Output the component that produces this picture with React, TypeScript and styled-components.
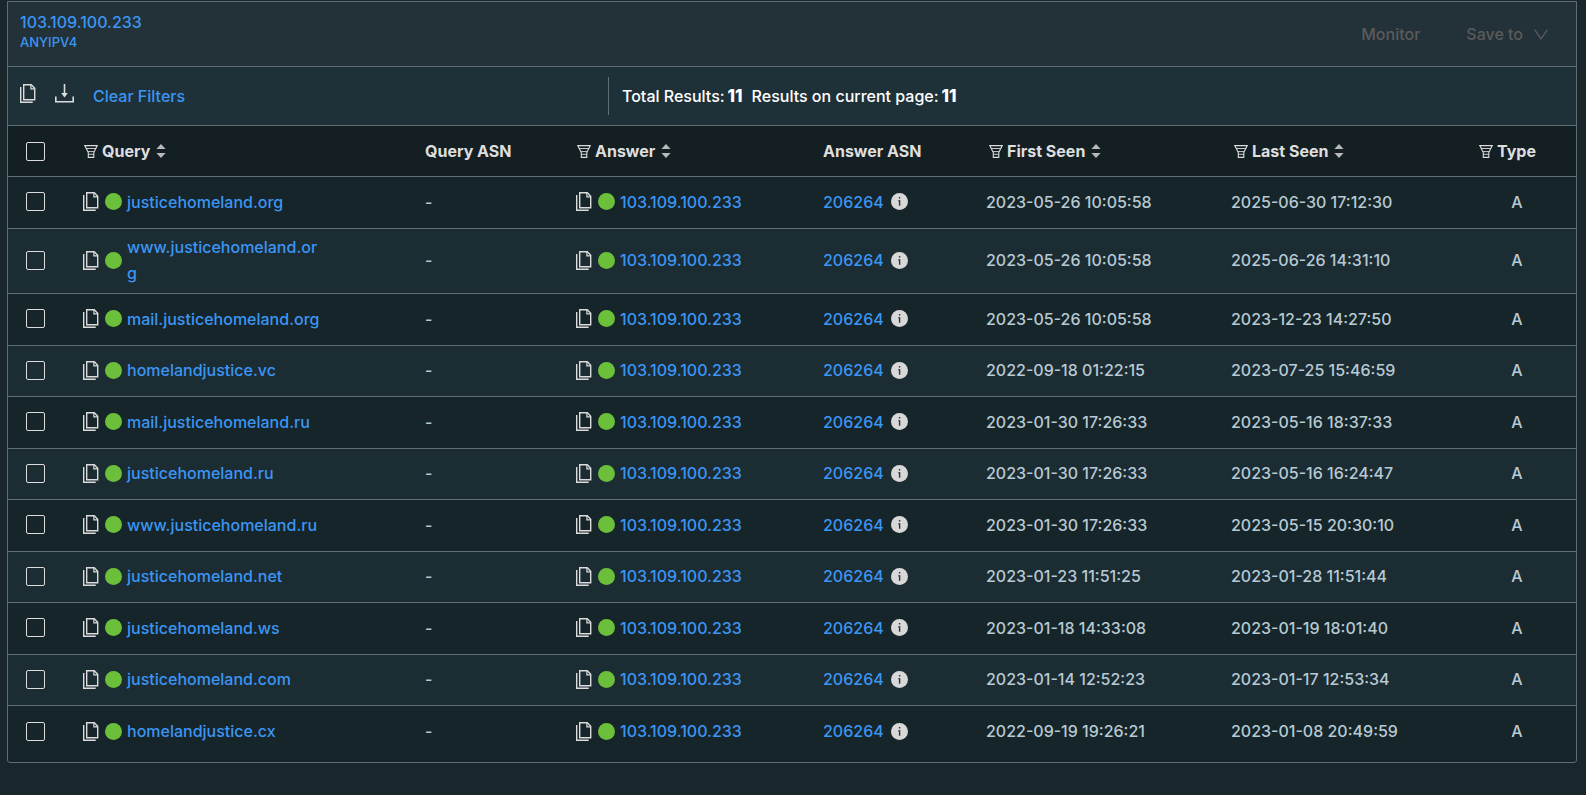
import React from 'react';
import styled, { createGlobalStyle } from 'styled-components';

const c = {
  page: '#19262b',
  header: '#233239',
  toolbar: '#1f3138',
  head: '#141f24',
  odd: '#162529',
  even: '#1c2c33',
  line: '#5f6e72',
  link: '#3b96f3',
  text: '#b7cad3',
  icon: '#dcdcdc',
  disabled: '#5b5b5b',
  dot: '#6cbf3a',
};

const GlobalStyle = createGlobalStyle`
  * { box-sizing: border-box; }
  body {
    margin: 0;
    background: ${c.page};
    color: ${c.text};
    font: 500 16px/26px Inter, "Liberation Sans", sans-serif;
  }
  svg { display: block; flex: none; }
`;

const Panel = styled.main`
  margin: 1px 9px 0 7px;
  padding-bottom: 4px;
  border: 1px solid ${c.line};
  border-radius: 0 0 3px 3px;
  background: ${c.odd};
`;

const Header = styled.header`
  display: flex;
  justify-content: space-between;
  align-items: center;
  height: 65px;
  padding: 0 28px 0 12px;
  background: ${c.header};
  border-bottom: 1px solid ${c.line};
`;

const Subject = styled.div`
  display: flex;
  flex-direction: column;
  align-items: flex-start;
  padding-bottom: 4px;
  line-height: 20px;
`;

const Link = styled.a<{ $numeric?: boolean }>`
  color: ${c.link};
  font-weight: ${p => (p.$numeric ? 450 : 500)};
  text-decoration: none;
`;

const SubjectKind = styled(Link)`
  font-size: 13px;
`;

const Actions = styled.div`
  display: flex;
  gap: 46px;
`;

const Button = styled.button`
  display: inline-flex;
  align-items: center;
  padding: 0;
  border: 0;
  background: none;
  color: ${c.icon};
  font: inherit;
  cursor: pointer;
  &:disabled { color: ${c.disabled}; cursor: default; }
`;

const MenuButton = styled(Button)`
  gap: 11px;
`;

const TextButton = styled(Button)`
  color: ${c.link};
`;

const Toolbar = styled.div`
  display: grid;
  grid-template-columns: 601px 1fr;
  align-items: center;
  height: 59px;
  background: ${c.toolbar};
  border-bottom: 1px solid ${c.line};
`;

const Tools = styled.div`
  display: flex;
  align-items: center;
  gap: 19px;
  height: 38px;
  padding-left: 12px;
  border-right: 1px solid ${c.line};
`;

const ToolIcon = styled(Button)`
  padding-bottom: 5px;
`;

const Totals = styled.div`
  display: flex;
  align-items: center;
  gap: 9px;
  padding-left: 13px;
  color: #fff;
  font-weight: 450;
`;

const Total = styled.span`
  display: flex;
  gap: 3px;
`;

const Count = styled.strong`
  font-size: 17px;
  font-weight: 800;
`;

const Table = styled.table`
  width: 100%;
  table-layout: fixed;
  border-spacing: 0;
`;

const Col = styled.col<{ $w: number }>`
  width: ${p => p.$w}px;
`;

const HeadCell = styled.th<{ $inset?: boolean }>`
  height: 51px;
  padding: 0 8px 0 ${p => (p.$inset ? 10 : 8)}px;
  background: ${c.head};
  border-bottom: 1px solid ${c.line};
  color: #dedede;
  font-weight: 650;
  text-align: left;
  white-space: nowrap;
`;

const Cell = styled.td<{ $center?: boolean }>`
  padding: ${p => (p.$center ? '5px 20px 7px 8px' : '5px 8px 7px')};
  border-bottom: 1px solid ${c.line};
  text-align: ${p => (p.$center ? 'center' : 'left')};
`;

const NumericCell = styled(Cell)`
  font-weight: 450;
`;

const Row = styled.tr`
  height: 52px;
  background: ${c.odd};
  &:nth-child(even) { height: 51px; background: ${c.even}; }
  &:last-child > td { border-bottom: 0; }
`;

const Check = styled.input.attrs({ type: 'checkbox' })`
  appearance: none;
  display: block;
  width: 19px;
  height: 19px;
  margin: 0 0 0 10px;
  border: 1px solid ${c.icon};
  border-radius: 2px;
  &:checked { background: ${c.link}; }
`;

const Label = styled.div`
  display: flex;
  align-items: center;
  gap: 4px;
`;

const SortButton = styled(Button)`
  margin-left: 2px;
`;

const FilterButton = styled(Button)`
  margin-left: 1px;
`;

const Host = styled.div`
  display: flex;
  align-items: center;
`;

const Dot = styled.span`
  flex: none;
  width: 17px;
  height: 17px;
  margin: 0 5px 0 6px;
  border-radius: 50%;
  background: ${c.dot};
`;

const HostLink = styled(Link)`
  max-width: 195px;
  word-break: break-all;
`;

const Asn = styled.div`
  display: flex;
  align-items: center;
  gap: 7px;
`;

const CopyIcon = () => (
  <svg width="16" height="19" viewBox="0 0 16 19" fill="none" stroke="currentColor" strokeWidth="1.4" aria-hidden="true">
    <path d="M3.7.7h7.6l3.4 3.6v11.5h-11z" />
    <path d="M10.9.9v3.9h3.6" strokeWidth="1.2" />
    <path d="M.7 3v15.3h12" />
  </svg>
);

const DownloadIcon = () => (
  <svg width="19" height="19" viewBox="0 0 19 19" fill="none" stroke="currentColor" strokeWidth="1.6" aria-hidden="true">
    <path d="M9.5 0v11" />
    <path d="M6.2 9h6.6L9.5 13.6z" fill="currentColor" stroke="none" />
    <path d="M.8 12.5v5.2h17.4v-5.2" />
  </svg>
);

const FilterIcon = () => (
  <svg width="14" height="13" viewBox="0 0 14 13" fill="none" stroke="currentColor" strokeWidth="1.1" aria-hidden="true">
    <path d="M.8.6h12.4L9.8 7.6v4.8H4.3V7.6z" />
    <path d="M2.2 3.5h9.6M3.8 6.6h6.4M4.3 9.3h5.5" strokeWidth="0.9" />
  </svg>
);

const SortIcon = () => (
  <svg width="10" height="14" viewBox="0 0 10 14" fill="#b9b9b9" aria-hidden="true">
    <path d="M5 0l4.6 5H.4zM5 14l4.6-5H.4z" />
  </svg>
);

const InfoIcon = () => (
  <svg width="17" height="17" viewBox="0 0 17 17" aria-hidden="true">
    <circle cx="8.5" cy="8.5" r="8.5" fill="#d8d8d8" />
    <path d="M8.6 3.9v1.7M8.6 7.2v5.6M7.4 7.8h1.2" fill="none" stroke="#2a3438" strokeWidth="1.4" />
  </svg>
);

const ChevronIcon = () => (
  <svg width="14" height="11" viewBox="0 0 14 11" fill="none" stroke="currentColor" strokeWidth="1.3" aria-hidden="true">
    <path d="M.6.6L7 9.8 13.4.6" />
  </svg>
);

type HeadingProps = { name: string; sortable?: boolean; inset?: boolean };

const FilterHeading = ({ name, sortable, inset }: HeadingProps) => (
  <HeadCell scope="col" $inset={inset}>
    <Label>
      <FilterButton aria-label={`Filter ${name}`}><FilterIcon /></FilterButton>
      {name}
      {sortable && <SortButton aria-label={`Sort by ${name}`}><SortIcon /></SortButton>}
    </Label>
  </HeadCell>
);

const HostEntry = ({ value, numeric }: { value: string; numeric?: boolean }) => (
  <Host>
    <Button aria-label={`Copy ${value}`}><CopyIcon /></Button>
    <Dot />
    <HostLink href="#" $numeric={numeric}>{value}</HostLink>
  </Host>
);

const address = '103.109.100.233';
const asn = '206264';

const records: [string, string, string][] = [
  ['justicehomeland.org', '2023-05-26 10:05:58', '2025-06-30 17:12:30'],
  ['www.justicehomeland.org', '2023-05-26 10:05:58', '2025-06-26 14:31:10'],
  ['mail.justicehomeland.org', '2023-05-26 10:05:58', '2023-12-23 14:27:50'],
  ['homelandjustice.vc', '2022-09-18 01:22:15', '2023-07-25 15:46:59'],
  ['mail.justicehomeland.ru', '2023-01-30 17:26:33', '2023-05-16 18:37:33'],
  ['justicehomeland.ru', '2023-01-30 17:26:33', '2023-05-16 16:24:47'],
  ['www.justicehomeland.ru', '2023-01-30 17:26:33', '2023-05-15 20:30:10'],
  ['justicehomeland.net', '2023-01-23 11:51:25', '2023-01-28 11:51:44'],
  ['justicehomeland.ws', '2023-01-18 14:33:08', '2023-01-19 18:01:40'],
  ['justicehomeland.com', '2023-01-14 12:52:23', '2023-01-17 12:53:34'],
  ['homelandjustice.cx', '2022-09-19 19:26:21', '2023-01-08 20:49:59'],
];

const columnWidths = [67, 342, 151, 247, 163, 245, 247, 106];

export default function App() {
  return (
    <>
      <GlobalStyle />
      <Panel>
        <Header>
          <Subject>
            <Link href="#" $numeric>{address}</Link>
            <SubjectKind href="#">ANYIPV4</SubjectKind>
          </Subject>
          <Actions>
            <Button disabled>Monitor</Button>
            <MenuButton disabled>Save to<ChevronIcon /></MenuButton>
          </Actions>
        </Header>
        <Toolbar>
          <Tools>
            <ToolIcon aria-label="Copy results"><CopyIcon /></ToolIcon>
            <ToolIcon aria-label="Download results"><DownloadIcon /></ToolIcon>
            <TextButton>Clear Filters</TextButton>
          </Tools>
          <Totals>
            <Total>Total Results: <Count>{records.length}</Count></Total>
            <Total>Results on current page: <Count>{records.length}</Count></Total>
          </Totals>
        </Toolbar>
        <Table>
          <colgroup>
            {columnWidths.map((w, i) => <Col key={i} $w={w} />)}
          </colgroup>
          <thead>
            <tr>
              <HeadCell><Check aria-label="Select all" /></HeadCell>
              <FilterHeading name="Query" sortable />
              <HeadCell scope="col">Query ASN</HeadCell>
              <FilterHeading name="Answer" sortable />
              <HeadCell scope="col">Answer ASN</HeadCell>
              <FilterHeading name="First Seen" sortable inset />
              <FilterHeading name="Last Seen" sortable inset />
              <FilterHeading name="Type" />
            </tr>
          </thead>
          <tbody>
            {records.map(([query, first, last]) => (
              <Row key={query}>
                <Cell><Check aria-label={`Select ${query}`} /></Cell>
                <Cell><HostEntry value={query} /></Cell>
                <Cell>-</Cell>
                <Cell><HostEntry value={address} numeric /></Cell>
                <Cell>
                  <Asn>
                    <Link href="#" $numeric>{asn}</Link>
                    <Button aria-label={`About ASN ${asn}`}><InfoIcon /></Button>
                  </Asn>
                </Cell>
                <NumericCell>{first}</NumericCell>
                <NumericCell>{last}</NumericCell>
                <Cell $center>A</Cell>
              </Row>
            ))}
          </tbody>
        </Table>
      </Panel>
    </>
  );
}
